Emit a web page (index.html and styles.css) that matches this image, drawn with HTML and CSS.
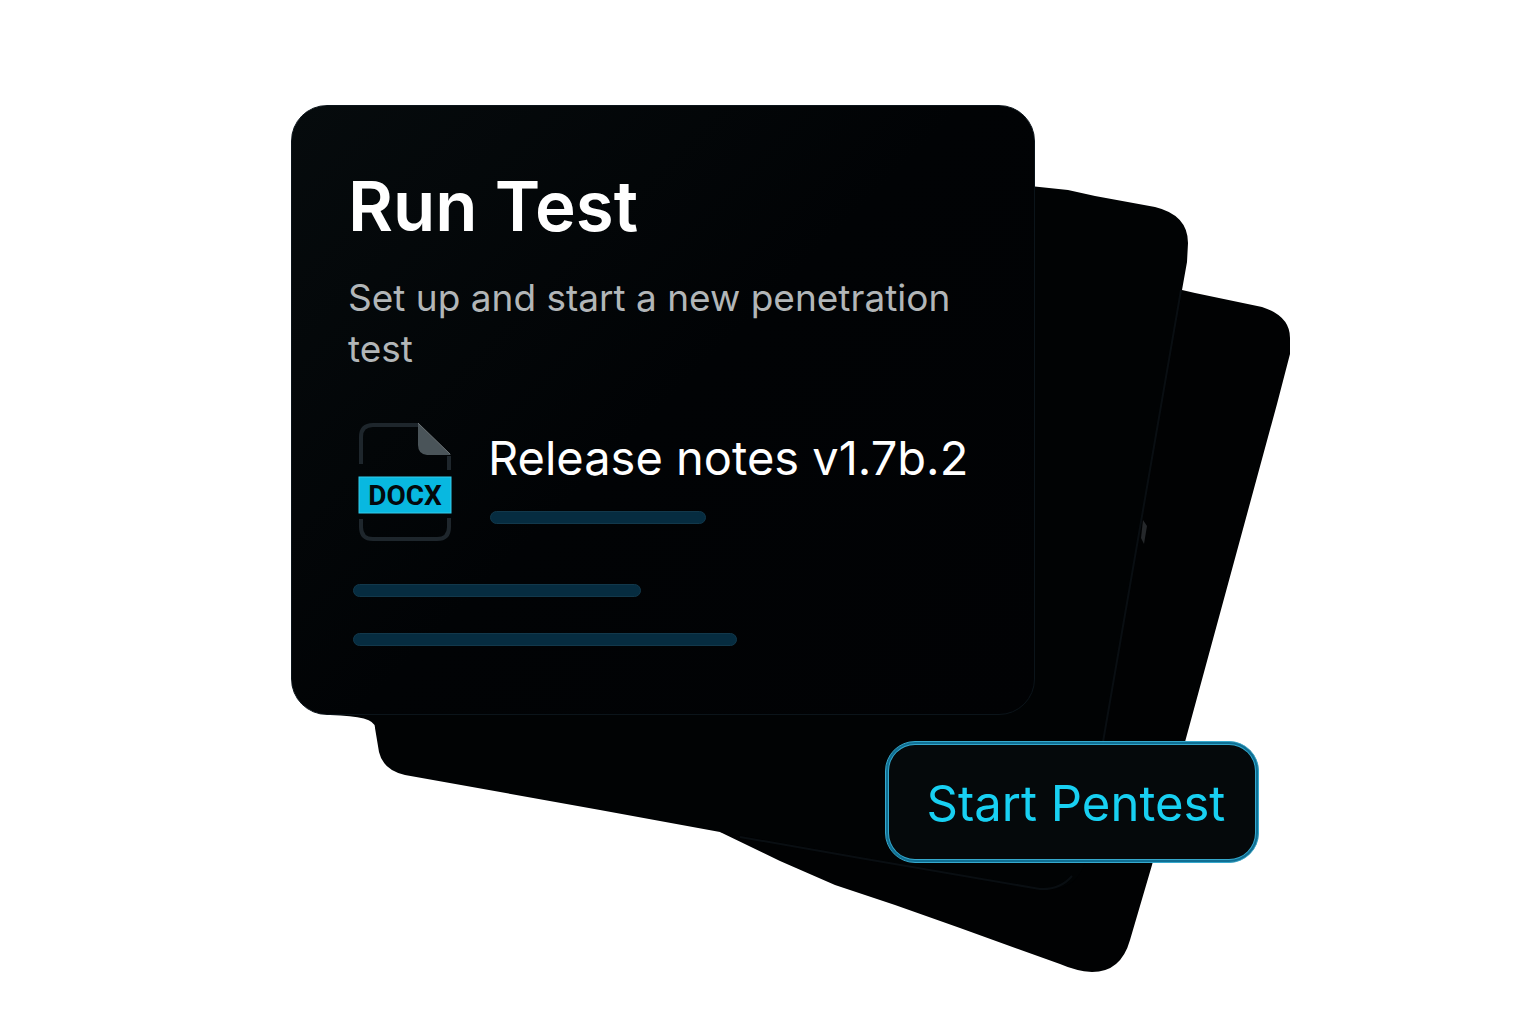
FILE: index.html
```html
<!DOCTYPE html>
<html lang="en">
<head>
<meta charset="utf-8">
<meta name="viewport" content="width=device-width, initial-scale=1">
<title>Run Test</title>
<link rel="stylesheet" href="styles.css">
</head>
<body>
<main class="page">
  <div class="stack">
    <svg class="stack-back" viewBox="291 105 1000 868" aria-hidden="true">
      <path fill="#010203" d="M1030 286L1182 290L1195 293L1262 307Q1290 316 1290 338V354L1277 404L1185 742L1152 865L1130 940Q1121 972 1092 972Q1076 971 1060 964L960 928L895 905L835 885L780 861L720 832Z"/>
      <path fill="#010304" d="M1030 186L1068 190L1095 196L1155 207Q1188 215 1188 243L1187 262L1182 290L1103 742L1088 850Q1081 893 1043 889L860 857L720 832L600 810L405 775Q383 770 379 752L375 728Q376 716 330 715V660H1030Z"/>
      <path fill="none" stroke="#090e12" stroke-width="2" d="M1181 290L1103 742M740 837L860 858L1040 889Q1060 890 1072 876"/>
      <path fill="#25282b" d="M1143 520l4 6l-3 18l-3-6z"/>
    </svg>
    <section class="card">
      <h1 class="title">Run Test</h1>
      <p class="subtitle">Set up and start a new penetration test</p>
      <div class="file">
        <svg class="file-icon" viewBox="0 0 94 120" role="img" aria-label="DOCX file">
          <g fill="none" stroke="#1e262c" stroke-width="4">
            <path d="M3 42V15Q3 3 15 3H60"/>
            <path d="M91 34V48"/>
            <path d="M3 97V105Q3 117 15 117H79Q91 117 91 105V96"/>
          </g>
          <path fill="#4a5459" d="M60 1L93 33H69Q60 32 60 23Z"/>
          <path fill="none" stroke="#6d7477" d="M60 1L92 32"/>
          <rect x="1" y="55" width="92" height="36" fill="#08b8e0" stroke="#35cbea"/>
          <text class="file-type" x="47" y="83" text-anchor="middle">DOCX</text>
        </svg>
        <div class="file-info">
          <h2 class="file-name">Release notes v1.7b.2</h2>
          <div class="bar bar-short"></div>
        </div>
      </div>
      <div class="bars">
        <div class="bar bar-medium"></div>
        <div class="bar bar-long"></div>
      </div>
    </section>
    <button class="start" type="button">Start Pentest</button>
  </div>
</main>
</body>
</html>
```
FILE: styles.css
```css
* {
  box-sizing: border-box;
}

body {
  margin: 0;
  background: #fff;
  font-family: Inter, "Liberation Sans", sans-serif;
}

h1,
h2,
p {
  margin: 0;
  font-weight: 400;
}

.page {
  padding: 105px 0 48px 46px;
}

.stack {
  position: relative;
  display: flex;
  flex-direction: column;
  align-items: flex-start;
  max-width: 1000px;
  margin: 0 auto;
  padding-bottom: 108px;
}

.stack-back {
  position: absolute;
  top: 0;
  left: 0;
  width: 100%;
}

.card {
  position: relative;
  width: 744px;
  max-width: 100%;
  padding: 56px 56px 68px;
  border: 1px solid #0b141a;
  border-radius: 36px;
  background: linear-gradient(135deg, #060b0d, #010305 50%, #010204);
}

.title {
  color: #fff;
  font-size: 69px;
  font-weight: 600;
  line-height: 88px;
}

.subtitle {
  margin-top: 22px;
  color: #b2b6b8;
  font-size: 37px;
  line-height: 51px;
}

.file {
  display: flex;
  gap: 36px;
  margin-top: 48px;
  padding-left: 10px;
}

.file-icon {
  flex: none;
  width: 94px;
  height: 120px;
}

.file-type {
  fill: #03090c;
  font: 700 28px Roboto, sans-serif;
}

.file-info {
  padding-top: 6px;
}

.file-name {
  color: #fff;
  font-size: 47px;
  line-height: 60px;
  white-space: nowrap;
}

.bar {
  height: 13px;
  border: 1px solid #12384b;
  border-radius: 7px;
  background: #062c40;
}

.bar-short {
  width: 216px;
  margin: 23px 0 0 2px;
}

.bars {
  display: grid;
  gap: 36px;
  margin-top: 42px;
  padding-left: 5px;
}

.bar-medium {
  width: 288px;
}

.bar-long {
  width: 384px;
}

.start {
  position: relative;
  align-self: flex-end;
  width: 374px;
  height: 122px;
  margin: 26px 32px 0 0;
  padding: 3px 0 0 8px;
  border: 1px solid #35a8cc;
  border-radius: 30px;
  background: #05090b;
  box-shadow: inset 0 0 0 2px #0f6f94, inset 0 0 0 3px #35a8cc;
  color: #18d0f2;
  font: 400 49px Inter, sans-serif;
  white-space: nowrap;
}
```
